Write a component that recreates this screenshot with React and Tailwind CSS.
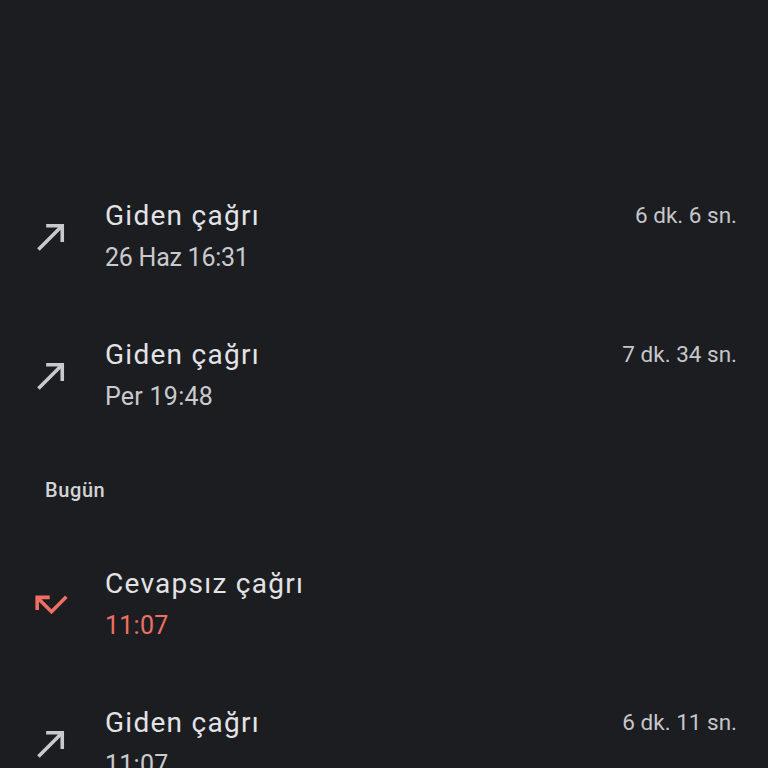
import React from "react";

function OutIcon() {
  return (
    <svg width="43" height="43" viewBox="0 0 24 24" className="shrink-0">
      <path d="M9 5v2h6.59L4 18.59 5.41 20 17 8.41V15h2V5z" fill="#c8c9cc" />
    </svg>
  );
}

function MissedIcon() {
  return (
    <svg width="43" height="43" viewBox="0 0 24 24" className="shrink-0">
      <path d="M19.59 7L12 14.59 6.41 9H11V7H3v8h2v-4.59l7 7 9-9z" fill="#ef6f63" />
    </svg>
  );
}

function Row({ missed, title, sub, dur }) {
  return (
    <div className="h-[139px] flex items-center">
      <div className="w-[105px] pl-[30px] flex items-center shrink-0">
        {missed ? <MissedIcon /> : <OutIcon />}
      </div>
      <div className="flex-1 flex flex-col pr-[31px]">
        <div className="flex items-center justify-between h-[42px]">
          <span className="text-[28px] text-[#e3e3e6] tracking-[0.045em]">{title}</span>
          {dur && <span className="text-[22.5px] text-[#c5c6cb]">{dur}</span>}
        </div>
        <div className={"h-[42px] flex items-center text-[25px] " + (missed ? "text-[#ef6f63]" : "text-[#c9cacd]")}>
          <span className={sub.startsWith("26") ? "tracking-[-0.01em]" : "tracking-[0.01em]"}>{sub}</span>
        </div>
      </div>
    </div>
  );
}

export default function App() {
  return (
    <div className="w-[768px] h-[768px] overflow-hidden bg-[#1c1d21]" style={{ fontFamily: "Roboto, 'Noto Sans', sans-serif" }}>
      <div className="h-[167px]" />
      <Row title="Giden çağrı" sub="26 Haz 16:31" dur="6 dk. 6 sn." />
      <Row title="Giden çağrı" sub="Per 19:48" dur="7 dk. 34 sn." />
      <div className="h-[90px] flex items-center pl-[45px] text-[20px] font-medium tracking-[0.03em] text-[#d2d3d6]">Bugün</div>
      <Row missed title="Cevapsız çağrı" sub="11:07" />
      <Row title="Giden çağrı" sub="11:07" dur="6 dk. 11 sn." />
    </div>
  );
}
